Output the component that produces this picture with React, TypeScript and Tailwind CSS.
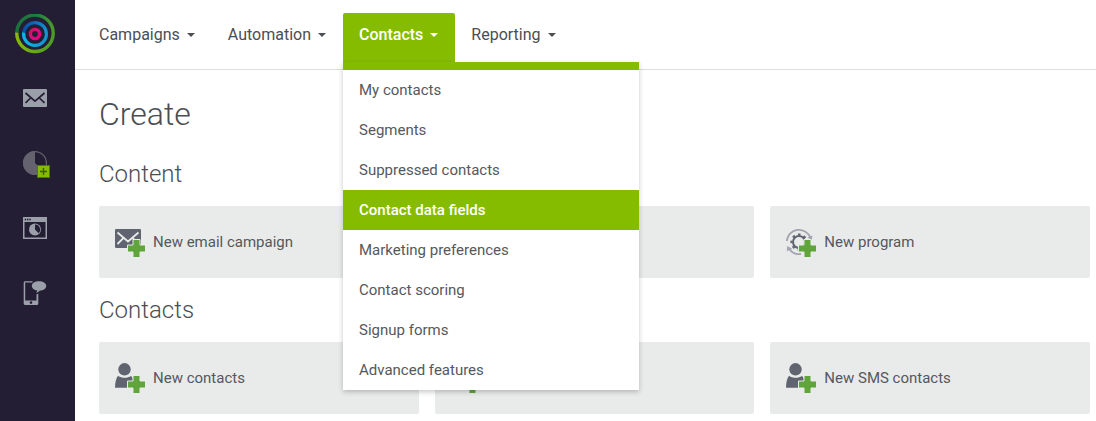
import type { ReactNode } from "react";

function Logo() {
  return (
    <svg viewBox="0 0 40 40" className="size-10" fill="none" aria-hidden="true">
      <defs>
        <linearGradient id="ring-green" x1="0" y1="0" x2="1" y2="0">
          <stop offset="0" stopColor="#86b80b" />
          <stop offset="0.6" stopColor="#5fa51c" />
          <stop offset="1" stopColor="#4c9a2a" />
        </linearGradient>
        <linearGradient id="ring-dark" x1="0" y1="0" x2="1" y2="0">
          <stop offset="0" stopColor="#1c7039" />
          <stop offset="0.6" stopColor="#1f8040" />
          <stop offset="1" stopColor="#4c9a2a" />
        </linearGradient>
        <linearGradient id="ring-blue" x1="0" y1="0" x2="1" y2="0">
          <stop offset="0" stopColor="#0a4ea8" />
          <stop offset="0.5" stopColor="#0f6cb8" />
          <stop offset="1" stopColor="#1593d0" />
        </linearGradient>
        <linearGradient id="ring-cyan" x1="0" y1="0" x2="1" y2="0">
          <stop offset="0" stopColor="#12b2e8" />
          <stop offset="0.5" stopColor="#0fa4dc" />
          <stop offset="1" stopColor="#1593d0" />
        </linearGradient>
        <linearGradient id="ring-pink" x1="0" y1="0" x2="1" y2="1">
          <stop offset="0" stopColor="#b8205c" />
          <stop offset="0.5" stopColor="#dd0c80" />
          <stop offset="1" stopColor="#e6007e" />
        </linearGradient>
      </defs>
      <path d="M1.8 18.5A18.2 18.2 0 0 1 38.2 20" stroke="url(#ring-dark)" strokeWidth="3.4" />
      <path d="M1.8 18.5A18.2 18.2 0 1 0 38.2 20" stroke="url(#ring-green)" strokeWidth="3.4" />
      <path d="M8.7 18.5A11.4 11.4 0 0 1 31.4 20" stroke="url(#ring-blue)" strokeWidth="3.2" />
      <path d="M8.7 18.5A11.4 11.4 0 1 0 31.4 20" stroke="url(#ring-cyan)" strokeWidth="3.2" />
      <circle cx="20" cy="20" r="4.6" stroke="url(#ring-pink)" strokeWidth="3.4" />
    </svg>
  );
}

function MailIcon() {
  return (
    <svg viewBox="0 0 24 18" className="h-[18px] w-6" fill="none" aria-hidden="true">
      <rect width="24" height="18" rx="1" fill="#9b9fa9" />
      <path
        d="M2.5 4 12 12.2 21.5 4M2.5 13.8 7.6 9M21.5 13.8 16.4 9"
        stroke="#241e34"
        strokeWidth="1.7"
      />
    </svg>
  );
}

function SegmentIcon() {
  return (
    <svg viewBox="-4 -4 32 32" className="size-8" fill="none" aria-hidden="true">
      <circle cx="12" cy="12" r="11.4" stroke="#64626f" strokeWidth="1.2" />
      <path d="M12 0A12 12 0 1 0 20.5 20.5L12 12Z" fill="#64626f" />
      <rect x="14.5" y="14.5" width="12" height="12" fill="#86bc00" stroke="#537519" />
      <path d="M20.5 17v7M17 20.5h7" stroke="#3a5720" strokeWidth="1.4" />
    </svg>
  );
}

function BrowserIcon() {
  return (
    <svg viewBox="0 0 24 22" className="h-[22px] w-6" fill="none" aria-hidden="true">
      <path fillRule="evenodd" d="M0 0h24v22H0ZM1.5 5v15.5h21V5Z" fill="#9b9fa9" />
      <path d="M1.7 2.5h1.5M4 2.5h1.5M6.3 2.5h1.5" stroke="#241e34" strokeWidth="1.5" />
      <circle cx="12" cy="12.6" r="6" fill="#9b9fa9" />
      <path d="M12 7.6a5 5 0 0 1 3.6 8.6L12 12.6Z" fill="#241e34" />
    </svg>
  );
}

function PhoneIcon() {
  return (
    <svg viewBox="0 0 24 24" className="size-6" fill="none" aria-hidden="true">
      <path
        fillRule="evenodd"
        d="M2 .3h7.500v1.200H2.200v18h11.300v-6l1.800-1v10a1.500 1.500 0 0 1-1.500 1.500H2A1.500 1.500 0 0 1 .7 22.500V1.800A1.500 1.500 0 0 1 2 .3ZM8 20.300a1.300 1.300 0 1 0 0 2.600 1.300 1.300 0 0 0 0-2.600Z"
        fill="#9b9fa9"
      />
      <path
        d="M16 .3c4 0 7.200 2 7.200 4.700s-3 4.700-6.700 4.700c-.6 1-1.700 1.800-3.500 2.200.8-.7 1.200-1.500 1.200-2.400-3.200-.4-5.400-2.200-5.400-4.500C8.800 2.300 12 .3 16 .3Z"
        fill="#9b9fa9"
      />
    </svg>
  );
}

function TileIcon({ children }: { children: ReactNode }) {
  return (
    <svg viewBox="0 -2 30 30" className="size-[30px] shrink-0" fill="none" aria-hidden="true">
      {children}
      <path
        d="M18 10.500h7V16h5.500v7H25v5.500h-7V23h-5.500v-7H18Z"
        fill="#60a53b"
        stroke="#e9ebea"
        strokeWidth="1"
      />
    </svg>
  );
}

function NewMailIcon() {
  return (
    <TileIcon>
      <rect width="26" height="19" rx="1.2" fill="#5f6470" />
      <path
        d="M2.500 3.500 13 12.500 23.500 3.500M2.500 15 8.300 9.200M23.500 15 17.700 9.200"
        stroke="#e9ebea"
        strokeWidth="1.8"
      />
    </TileIcon>
  );
}

function NewPersonIcon() {
  return (
    <TileIcon>
      <circle cx="9.5" cy="4.3" r="6.2" fill="#5f6470" />
      <path d="M0 22.800C.1 17.500 1 13.500 3 10.700c3.600 2.600 9.400 2.800 13 .3 1 .8 1.700 2 2 3.500v8.300Z" fill="#5f6470" />
    </TileIcon>
  );
}

function NewProgramIcon() {
  return (
    <TileIcon>
      <path
        d="M.8 12A12.200 12.200 0 0 1 24.300 8.500M3 19.500A12.200 12.200 0 0 0 15 25"
        stroke="#a2a5af"
        strokeWidth="1.8"
      />
      <path d="m21.500 8.500 5-2-.9 4.600ZM.8 22.300 1.300 17l5 2.700Z" fill="#a2a5af" />
      <circle cx="13" cy="13" r="6" stroke="#5f6470" strokeWidth="2" />
      <circle
        cx="13"
        cy="13"
        r="7.6"
        stroke="#5f6470"
        strokeWidth="2"
        strokeDasharray="2.6 3.37"
        strokeDashoffset="1.3"
      />
    </TileIcon>
  );
}

function Caret() {
  return (
    <svg viewBox="0 0 8 4" className="h-1 w-2" aria-hidden="true">
      <path d="M0 0h8L4 4Z" fill="currentColor" />
    </svg>
  );
}

const sideLinks = [
  { label: "Email", icon: <MailIcon /> },
  { label: "Segments", icon: <SegmentIcon /> },
  { label: "Pages", icon: <BrowserIcon /> },
  { label: "SMS", icon: <PhoneIcon /> },
];

const menuItems = [
  "My contacts",
  "Segments",
  "Suppressed contacts",
  "Contact data fields",
  "Marketing preferences",
  "Contact scoring",
  "Signup forms",
  "Advanced features",
];

function NavButton({ children }: { children: ReactNode }) {
  return (
    <button type="button" className="flex h-[43px] items-center gap-[7px] pr-[17px] pl-4">
      {children}
      <Caret />
    </button>
  );
}

function ContactsMenu() {
  return (
    <div className="relative">
      <button
        type="button"
        aria-expanded="true"
        className="flex h-[49px] items-center gap-[7px] rounded-t-xs bg-[#86bc00] pr-[17px] pb-1.5 pl-4 font-medium text-white"
      >
        Contacts
        <Caret />
      </button>
      <ul className="absolute top-full left-0 z-10 w-[296px] border-t-8 border-[#86bc00] bg-white text-[15px] text-[#55585d] shadow-[0_2px_5px_rgba(0,0,0,0.22)]">
        {menuItems.map((item) => (
          <li key={item}>
            <a
              href="#"
              className={
                item === "Contact data fields"
                  ? "flex h-10 items-center bg-[#86bc00] px-4 font-medium text-white"
                  : "flex h-10 items-center px-4"
              }
            >
              {item}
            </a>
          </li>
        ))}
      </ul>
    </div>
  );
}

function Tile({ icon, label, name }: { icon: ReactNode; label?: string; name?: string }) {
  return (
    <a
      href="#"
      aria-label={name}
      className="flex h-[72px] items-center gap-2 rounded-xs bg-[#e9ebea] px-4 text-[15px] text-[#55585d]"
    >
      {icon}
      {label}
    </a>
  );
}

function Section({ title, children }: { title: string; children: ReactNode }) {
  return (
    <section>
      <h2 className="mb-4 text-2xl font-light">{title}</h2>
      <div className="grid grid-cols-3 gap-4">{children}</div>
    </section>
  );
}

export default function App() {
  return (
    <div className="flex min-h-screen bg-white font-[Roboto,sans-serif] text-[#4b4e53]">
      <aside className="flex w-[75px] shrink-0 flex-col bg-[#241e34] pt-3.5 pr-[5px]">
        <a href="#" aria-label="Home" className="mb-[11px] flex justify-center">
          <Logo />
        </a>
        {sideLinks.map(({ label, icon }) => (
          <a key={label} href="#" aria-label={label} className="flex h-[65px] items-center justify-center">
            {icon}
          </a>
        ))}
      </aside>
      <div className="min-w-0 flex-1">
        <nav className="flex h-[70px] items-start border-b border-[#dcdddd] pt-[13px] pl-2">
          <NavButton>Campaigns</NavButton>
          <NavButton>Automation</NavButton>
          <ContactsMenu />
          <NavButton>Reporting</NavButton>
        </nav>
        <main className="flex flex-col gap-4 pt-6 pr-1.5 pl-6">
          <h1 className="mb-2 text-[32px] leading-10 font-light">Create</h1>
          <Section title="Content">
            <Tile icon={<NewMailIcon />} label="New email campaign" />
            <Tile icon={<NewMailIcon />} name="New content" />
            <Tile icon={<NewProgramIcon />} label="New program" />
          </Section>
          <Section title="Contacts">
            <Tile icon={<NewPersonIcon />} label="New contacts" />
            <Tile icon={<NewPersonIcon />} name="New contact group" />
            <Tile icon={<NewPersonIcon />} label="New SMS contacts" />
          </Section>
        </main>
      </div>
    </div>
  );
}
